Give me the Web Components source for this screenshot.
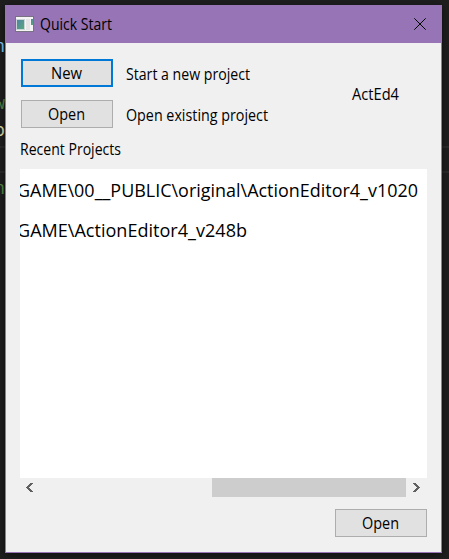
<!DOCTYPE html>
<html lang="en">
<head>
<meta charset="utf-8">
<title>Quick Start</title>
<style>
html,body{margin:0;width:449px;height:559px;overflow:hidden;background:#1c1c1c}
body{font:15.5px/20px "Open Sans","Noto Sans",sans-serif;color:#000}
</style>
</head>
<body>
<desktop-backdrop>
  <app-window>
    <title-bar slot="title"><fit-text w="72">Quick Start</fit-text></title-bar>
    <start-panel></start-panel>
  </app-window>
</desktop-backdrop>
<script>
function define(name, html, setup) {
  customElements.define(name, class extends HTMLElement {
    connectedCallback() {
      if (this.shadowRoot) return;
      this.attachShadow({mode: 'open'}).innerHTML = html;
      if (setup) setup(this);
    }
  });
}

// Label whose glyph advance is scaled horizontally to a given width.
define('fit-text', `<style>
  :host{display:block;white-space:pre;height:20px;flex:none}
  span{display:inline-block;transform-origin:0 50%}
</style><span><slot></slot></span>`, el => {
  const s = el.shadowRoot.querySelector('span');
  const w = +el.getAttribute('w');
  el.style.width = w + 'px';
  s.style.transform = `translate(0,-1px) scaleX(${w / s.getBoundingClientRect().width})`;
});

define('push-button', `<style>
  :host{box-sizing:border-box;width:92px;height:28px;display:flex;align-items:center;justify-content:center;
    background:#e1e1e1;border:1px solid #adadad;flex:none;padding:2px 1px 0 0}
  :host([focused]){border:2px solid #0078d7}
</style><slot></slot>`);

define('list-item', `<style>
  :host{display:flex;align-items:center;height:40px;font-size:19px;line-height:20px}
</style><slot></slot>`);

define('scroll-bar', `<style>
  :host{display:grid;grid-template-columns:21px 171px 194px 21px;height:19px;background:#f0f0f0}
  svg{display:block;width:21px;height:19px}
  .thumb{background:#cdcdcd}
  path{fill:#606060}
</style>
<svg viewBox="0 0 21 19"><path d="M10 5H13V6H12V7H11V8H10V9H9V10H10V11H11V12H12V13H13V14H10V13H9V12H8V11H7V10H6V9H7V8H8V7H9V6H10Z"/></svg>
<span></span><span class="thumb"></span>
<svg viewBox="0 0 21 19"><path d="M7 5H10V6H11V7H12V8H13V9H14V10H13V11H12V12H11V13H10V14H7V13H8V12H9V11H10V10H11V9H10V8H9V7H8V6H7Z"/></svg>`);

define('project-list', `<style>
  :host{display:block;width:407px;height:328px}
  .view{box-sizing:border-box;height:309px;background:#fff;overflow:hidden;padding-top:2px}
  list-item{margin-left:-3px}
</style>
<div class="view">
  <list-item><fit-text w="401">GAME\\00__PUBLIC\\original\\ActionEditor4_v1020</fit-text></list-item>
  <list-item><fit-text w="230">GAME\\ActionEditor4_v248b</fit-text></list-item>
</div><scroll-bar></scroll-bar>`);

define('title-bar', `<style>
  :host{display:flex;align-items:center;box-sizing:border-box;height:37px;padding:0 0 1px 9px}
  ::slotted(fit-text){margin-top:2px}
  .icon{width:19px;height:16px;margin-right:6px}
  .close{width:12px;height:12px;margin:0 15px 1px auto}
  svg{flex:none;display:block}
</style>
<svg class="icon" viewBox="0 0 19 16">
  <defs><linearGradient id="g" x2="1" y2="1"><stop stop-color="#4f84a5"/><stop offset="1" stop-color="#58a77c"/></linearGradient></defs>
  <path fill="#777381" d="M0 0H19V16H0Z"/><path fill="#f5f5f5" d="M1 1H18V15H1Z"/>
  <path fill="#c9d5d5" d="M1 3H10V14H1Z"/><path fill="url(#g)" d="M2 4H9V13H2Z"/>
  <path fill="#e5e5e8" d="M11 3H15V14H11Z"/><path fill="url(#g)" d="M16 3H18V9H16Z"/>
</svg>
<slot></slot>
<svg class="close" viewBox="0 0 12 12"><path d="M.3.3 11.7 11.7M11.7.3.3 11.7" stroke="#000" fill="none"/></svg>`);

define('start-panel', `<style>
  :host{display:block;padding:16px 14px 0}
  .top{display:flex;height:69px}
  .actions{display:grid;grid-template-rows:28px 28px;row-gap:13px;width:332px;margin-left:1px}
  .row{display:flex;align-items:center;gap:13px}
  .row>fit-text{margin-top:3px}
  .name{margin:26px 0 0 -1px}
  .heading{margin:12px 0 9px}
  .foot{display:flex;justify-content:flex-end;padding:12px 0 0;width:407px}
</style>
<div class="top">
  <div class="actions">
    <div class="row"><push-button focused><fit-text w="31">New</fit-text></push-button><fit-text w="124">Start a new project</fit-text></div>
    <div class="row"><push-button><fit-text w="37">Open</fit-text></push-button><fit-text w="142">Open existing project</fit-text></div>
  </div>
  <fit-text class="name" w="47">ActEd4</fit-text>
</div>
<fit-text class="heading" w="101">Recent Projects</fit-text>
<project-list></project-list>
<div class="foot"><push-button><fit-text w="37">Open</fit-text></push-button></div>`);

define('app-window', `<style>
  :host{display:block;box-sizing:border-box;width:437px;height:548px;border:1px solid #9674b5;background:#f0f0f0;
    box-shadow:0 2px 7px #0008;position:relative}
  header{background:#9674b5}
</style><header><slot name="title"></slot></header><slot></slot>`);

// Dark code editor that remains visible around the dialog.
define('desktop-backdrop', `<style>
  :host{display:block;box-sizing:border-box;width:449px;height:559px;padding:5px;background:#1e1e1e;position:relative;overflow:hidden}
  .code{position:absolute;right:444px;line-height:20px;font-family:"Liberation Mono",monospace;font-size:18px}
  i{position:absolute;left:0;width:449px;height:2px;background:#292929}
</style>
<i style="top:146px"></i><i style="top:171px"></i>
<span class="code" style="top:37px;color:#7bc5f5">n</span>
<span class="code" style="top:94px;color:#568747">w</span>
<span class="code" style="top:121px;color:#dcdcaa">o</span>
<span class="code" style="top:179px;color:#568747">n</span>
<slot></slot>`);
</script>
</body>
</html>
